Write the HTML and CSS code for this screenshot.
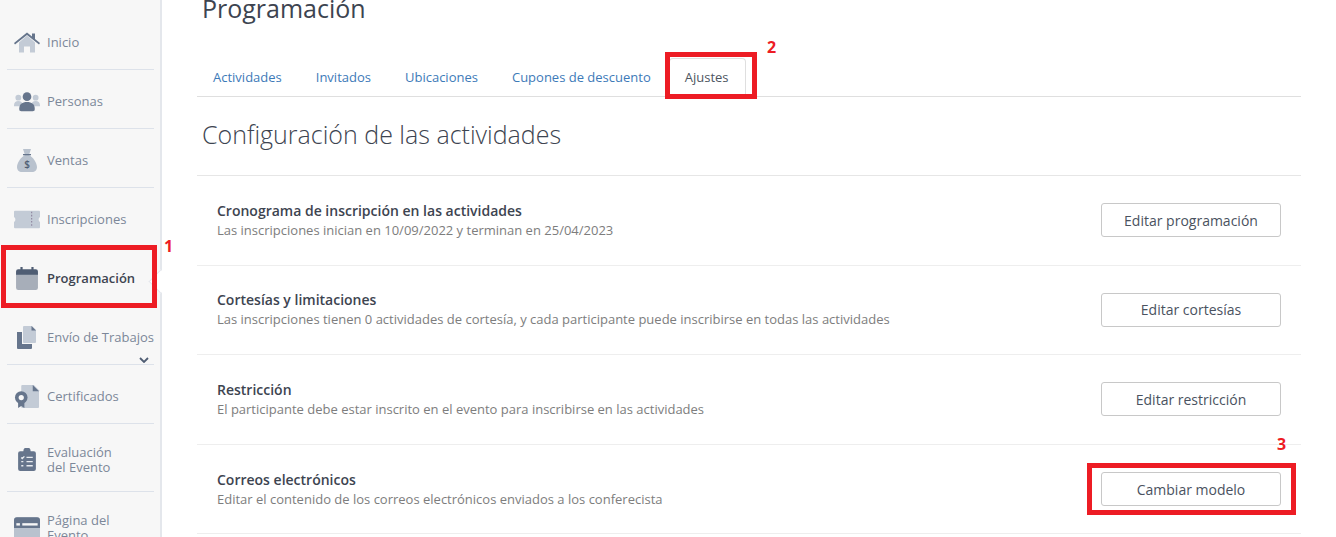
FILE: index.html
```html
<!DOCTYPE html>
<html lang="es">
<head>
<meta charset="utf-8">
<title>Programación</title>
<link rel="stylesheet" href="styles.css">
</head>
<body>
<div class="app">
  <aside class="sidebar">
    <nav class="menu">
      <a class="item"><svg class="ico" viewBox="0 0 26 22"><path fill="#c3cbd6" d="M5 11 13 4l8 7v10h-5v-6h-6v6H5z"/><path fill="#66758c" d="M0 11.500 13 1l5 4V2h3v5.500l5 4-1 1.500L13 3.500 1 13z"/></svg><span>Inicio</span></a>
      <a class="item"><svg class="ico" viewBox="0 0 27 20"><circle cx="4.500" cy="6" r="3" fill="#c3cbd6"/><circle cx="22.500" cy="6" r="3" fill="#c3cbd6"/><path fill="#c3cbd6" d="M0 14c0-3 2-4.500 4.500-4.500S9 11 9 14v1H0zM18 14c0-3 2-4.500 4.500-4.500S27 11 27 14v1h-9z"/><circle cx="13.500" cy="5" r="4.500" fill="#66758c"/><path fill="#66758c" d="M5.500 17c0-4 3-6.500 8-6.500s8 2.500 8 6.500v1.500c0 1-1 1.500-2 1.500h-12c-1 0-2-.5-2-1.500z"/></svg><span>Personas</span></a>
      <a class="item"><svg class="ico" viewBox="0 0 22 23"><path fill="#b9c2ce" d="M7 0h8l-2 6c4 2 8 8 8 12 0 3-2 5-5 5H6c-3 0-5-2-5-5 0-4 4-10 8-12z"/><path fill="#66758c" d="M7 5h8v1.300H7z"/><text x="11" y="19" class="dollar">$</text></svg><span>Ventas</span></a>
      <a class="item"><svg class="ico" viewBox="0 0 25 17"><path fill="#c3cbd6" d="M1 0h23a1 1 0 0 1 1 1v5a3 3 0 0 0 0 5v5a1 1 0 0 1-1 1H1a1 1 0 0 1-1-1v-5a3 3 0 0 0 0-5V1a1 1 0 0 1 1-1z"/><path stroke="#8a7f9a" stroke-dasharray="1.500 1.500" d="M17 1v15" fill="none"/></svg><span>Inscripciones</span></a>
      <a class="item active"><svg class="ico" viewBox="0 0 20 21"><path fill="#a7aeb9" d="M0 6h20v13a2 2 0 0 1-2 2H2a2 2 0 0 1-2-2z"/><path fill="#4f5d73" d="M2 2h2V0h2v2h8V0h2v2h2a2 2 0 0 1 2 2v3H0V4a2 2 0 0 1 2-2z"/></svg><span>Programación</span></a>
      <a class="item"><svg class="ico" viewBox="0 0 20 23"><path fill="#66758c" d="M0 6h5v12h10v4a1 1 0 0 1-1 1H1a1 1 0 0 1-1-1z"/><path fill="#c3cbd6" d="M6 1a1 1 0 0 1 1-1h8l4 4v12a1 1 0 0 1-1 1H7a1 1 0 0 1-1-1z"/><path fill="#66758c" d="M14.500 0 19 4.500h-4.500z"/></svg><span>Envío de Trabajos</span><svg class="chevron" viewBox="0 0 10 6"><path d="M1 1l4 4 4-4" fill="none" stroke="#4f5d73" stroke-width="1.800"/></svg></a>
      <a class="item"><svg class="ico" viewBox="0 0 23 22"><path fill="#c3cbd6" d="M6 1a1 1 0 0 1 1-1h11l5 5v16a1 1 0 0 1-1 1H7a1 1 0 0 1-1-1z"/><path fill="#66758c" d="M17 0l6 6h-6z"/><path fill="#66758c" d="M3 16h6v6l-3-2-3 2z"/><circle cx="6" cy="12" r="6" fill="#66758c"/><circle cx="6" cy="12" r="2.500" fill="#f7f7f7"/></svg><span>Certificados</span></a>
      <a class="item tall"><svg class="ico" viewBox="0 0 17 22"><path fill="#66758c" d="M2 3h3a3.500 3.500 0 0 1 7 0h3a2 2 0 0 1 2 2v15a2 2 0 0 1-2 2H2a2 2 0 0 1-2-2V5a2 2 0 0 1 2-2z"/><path stroke="#e9ecf0" stroke-width="1.300" fill="none" d="M8 9h6M8 13h6M8 17h6M3 9l1 1 2-2M3 13h2M3 17h2"/></svg><span>Evaluación<br>del Evento</span></a>
      <a class="item tall last"><svg class="ico" viewBox="0 0 22 19"><rect width="22" height="19" rx="2.500" fill="#b9c2ce"/><path fill="#66758c" d="M2.500 0h17A2.500 2.500 0 0 1 22 2.500V9H0V2.500A2.500 2.500 0 0 1 2.500 0z"/><rect x="2" y="5" width="3" height="2" fill="#f7f7f7"/><rect x="7" y="5" width="13" height="2" fill="#f7f7f7"/></svg><span>Página del<br>Evento</span></a>
    </nav>
  </aside>
  <main class="content">
    <h1 class="title">Programación</h1>
    <div class="tabs">
      <a class="tab">Actividades</a>
      <a class="tab">Invitados</a>
      <a class="tab">Ubicaciones</a>
      <a class="tab">Cupones de descuento</a>
      <a class="tab current">Ajustes</a>
    </div>
    <h2 class="subtitle">Configuración de las actividades</h2>
    <section class="rows">
      <div class="row">
        <div class="info"><h3>Cronograma de inscripción en las actividades</h3><p>Las inscripciones inician en 10/09/2022 y terminan en 25/04/2023</p></div>
        <button class="btn">Editar programación</button>
      </div>
      <div class="row">
        <div class="info"><h3>Cortesías y limitaciones</h3><p>Las inscripciones tienen 0 actividades de cortesía, y cada participante puede inscribirse en todas las actividades</p></div>
        <button class="btn">Editar cortesías</button>
      </div>
      <div class="row">
        <div class="info"><h3>Restricción</h3><p>El participante debe estar inscrito en el evento para inscribirse en las actividades</p></div>
        <button class="btn">Editar restricción</button>
      </div>
      <div class="row">
        <div class="info"><h3>Correos electrónicos</h3><p>Editar el contenido de los correos electrónicos enviados a los conferecista</p></div>
        <button class="btn">Cambiar modelo</button>
      </div>
    </section>
  </main>
</div>
<div class="mark box-1"></div>
<div class="mark box-2"></div>
<div class="mark box-3"></div>
<span class="num num-1">1</span>
<span class="num num-2">2</span>
<span class="num num-3">3</span>
</body>
</html>
```
FILE: styles.css
```css
* { box-sizing: border-box; }
html, body { height: 100%; }
body {
  margin: 0;
  overflow: hidden;
  background: #fff;
  font-family: "Open Sans", sans-serif;
  color: #3d4450;
}
.app { display: flex; height: 537px; overflow: hidden; }
.sidebar {
  flex: 0 0 162px;
  min-width: 0;
  background: #f7f7f7;
  border-right: 2px solid #e4e7ec;
  padding: 11px 6px 0 7px;
}
.menu { display: flex; flex-direction: column; }
.item {
  position: relative;
  display: flex;
  align-items: center;
  flex: none;
  height: 59px;
  padding: 4px 0 0 7px;
  border-bottom: 1px solid #dde2ea;
  color: #7c8799;
  font-size: 13px;
  line-height: 15px;
  white-space: nowrap;
}
.item.tall { height: 68px; }
.item.last { border-bottom: 0; }
.item.active { color: #3d4450; font-weight: 600; }
.item.active::after {
  content: "";
  position: absolute;
  right: -15px;
  top: 26px;
  width: 16px;
  height: 16px;
  background: #fff;
  border-left: 1px solid #e4e7ec;
  border-bottom: 1px solid #e4e7ec;
  transform: rotate(45deg);
}
.ico {
  flex: none;
  width: 26px;
  height: 23px;
  margin-right: 7px;
}
.dollar { font: 600 10px "Open Sans", sans-serif; fill: #4f5d73; text-anchor: middle; }
.chevron {
  position: absolute;
  right: 5px;
  bottom: 1px;
  width: 10px;
  height: 6px;
}
.content { flex: 1; min-width: 0; padding: 0 35px 0 35px; }
.title {
  margin: -9px 0 0 5px;
  font-size: 25px;
  line-height: 34px;
  font-weight: 400;
  color: #3d4450;
}
.tabs {
  display: flex;
  height: 72px;
  padding-top: 32px;
  align-items: stretch;
  border-bottom: 1px solid #dfdfdf;
}
.tab {
  display: flex;
  align-items: center;
  padding: 0 15px;
  margin-right: 2px;
  border: 1px solid transparent;
  border-bottom: 0;
  font-size: 13px;
  color: #3d7ab8;
  border-radius: 4px 4px 0 0;
}
.tab.current {
  color: #4d5561;
  background: #fff;
  border-color: #dfdfdf;
  margin-top: 1px;
  margin-bottom: -1px;
  margin-right: 0;
  padding: 0 16px 2px 15px;
}
.subtitle {
  margin: 21px 0 0 5px;
  font-size: 25px;
  line-height: 32px;
  font-weight: 300;
  color: #3d4450;
}
.rows { margin-top: 25px; border-top: 1px solid #e6e6e6; }
.row {
  display: flex;
  justify-content: space-between;
  align-items: center;
  height: 89.600px;
  padding: 0 20px;
  border-bottom: 1px solid #eeeeee;
}
.info h3 {
  margin: 0 0 1px;
  font-size: 14px;
  line-height: 18px;
  font-weight: 600;
  color: #3d4450;
}
.info p {
  margin: 0;
  font-size: 13px;
  line-height: 18px;
  color: #7d7d7d;
}
.btn {
  flex: none;
  width: 180px;
  height: 34px;
  background: #fff;
  border: 1px solid #c8c8c8;
  border-radius: 3px;
  font: 400 14px "Open Sans", sans-serif;
  color: #4a5260;
}
.mark { position: absolute; border: 5px solid #ed1c24; }
.box-1 { left: 1px; top: 245px; width: 156px; height: 63px; }
.box-2 { left: 665px; top: 52px; width: 92px; height: 47px; }
.box-3 { left: 1087px; top: 463px; width: 209px; height: 52px; }
.num { position: absolute; color: #ed1c24; font-weight: 700; font-size: 16px; line-height: 20px; }
.num-1 { left: 164px; top: 236px; }
.num-2 { left: 767px; top: 37px; }
.num-3 { left: 1277px; top: 434px; }
```
